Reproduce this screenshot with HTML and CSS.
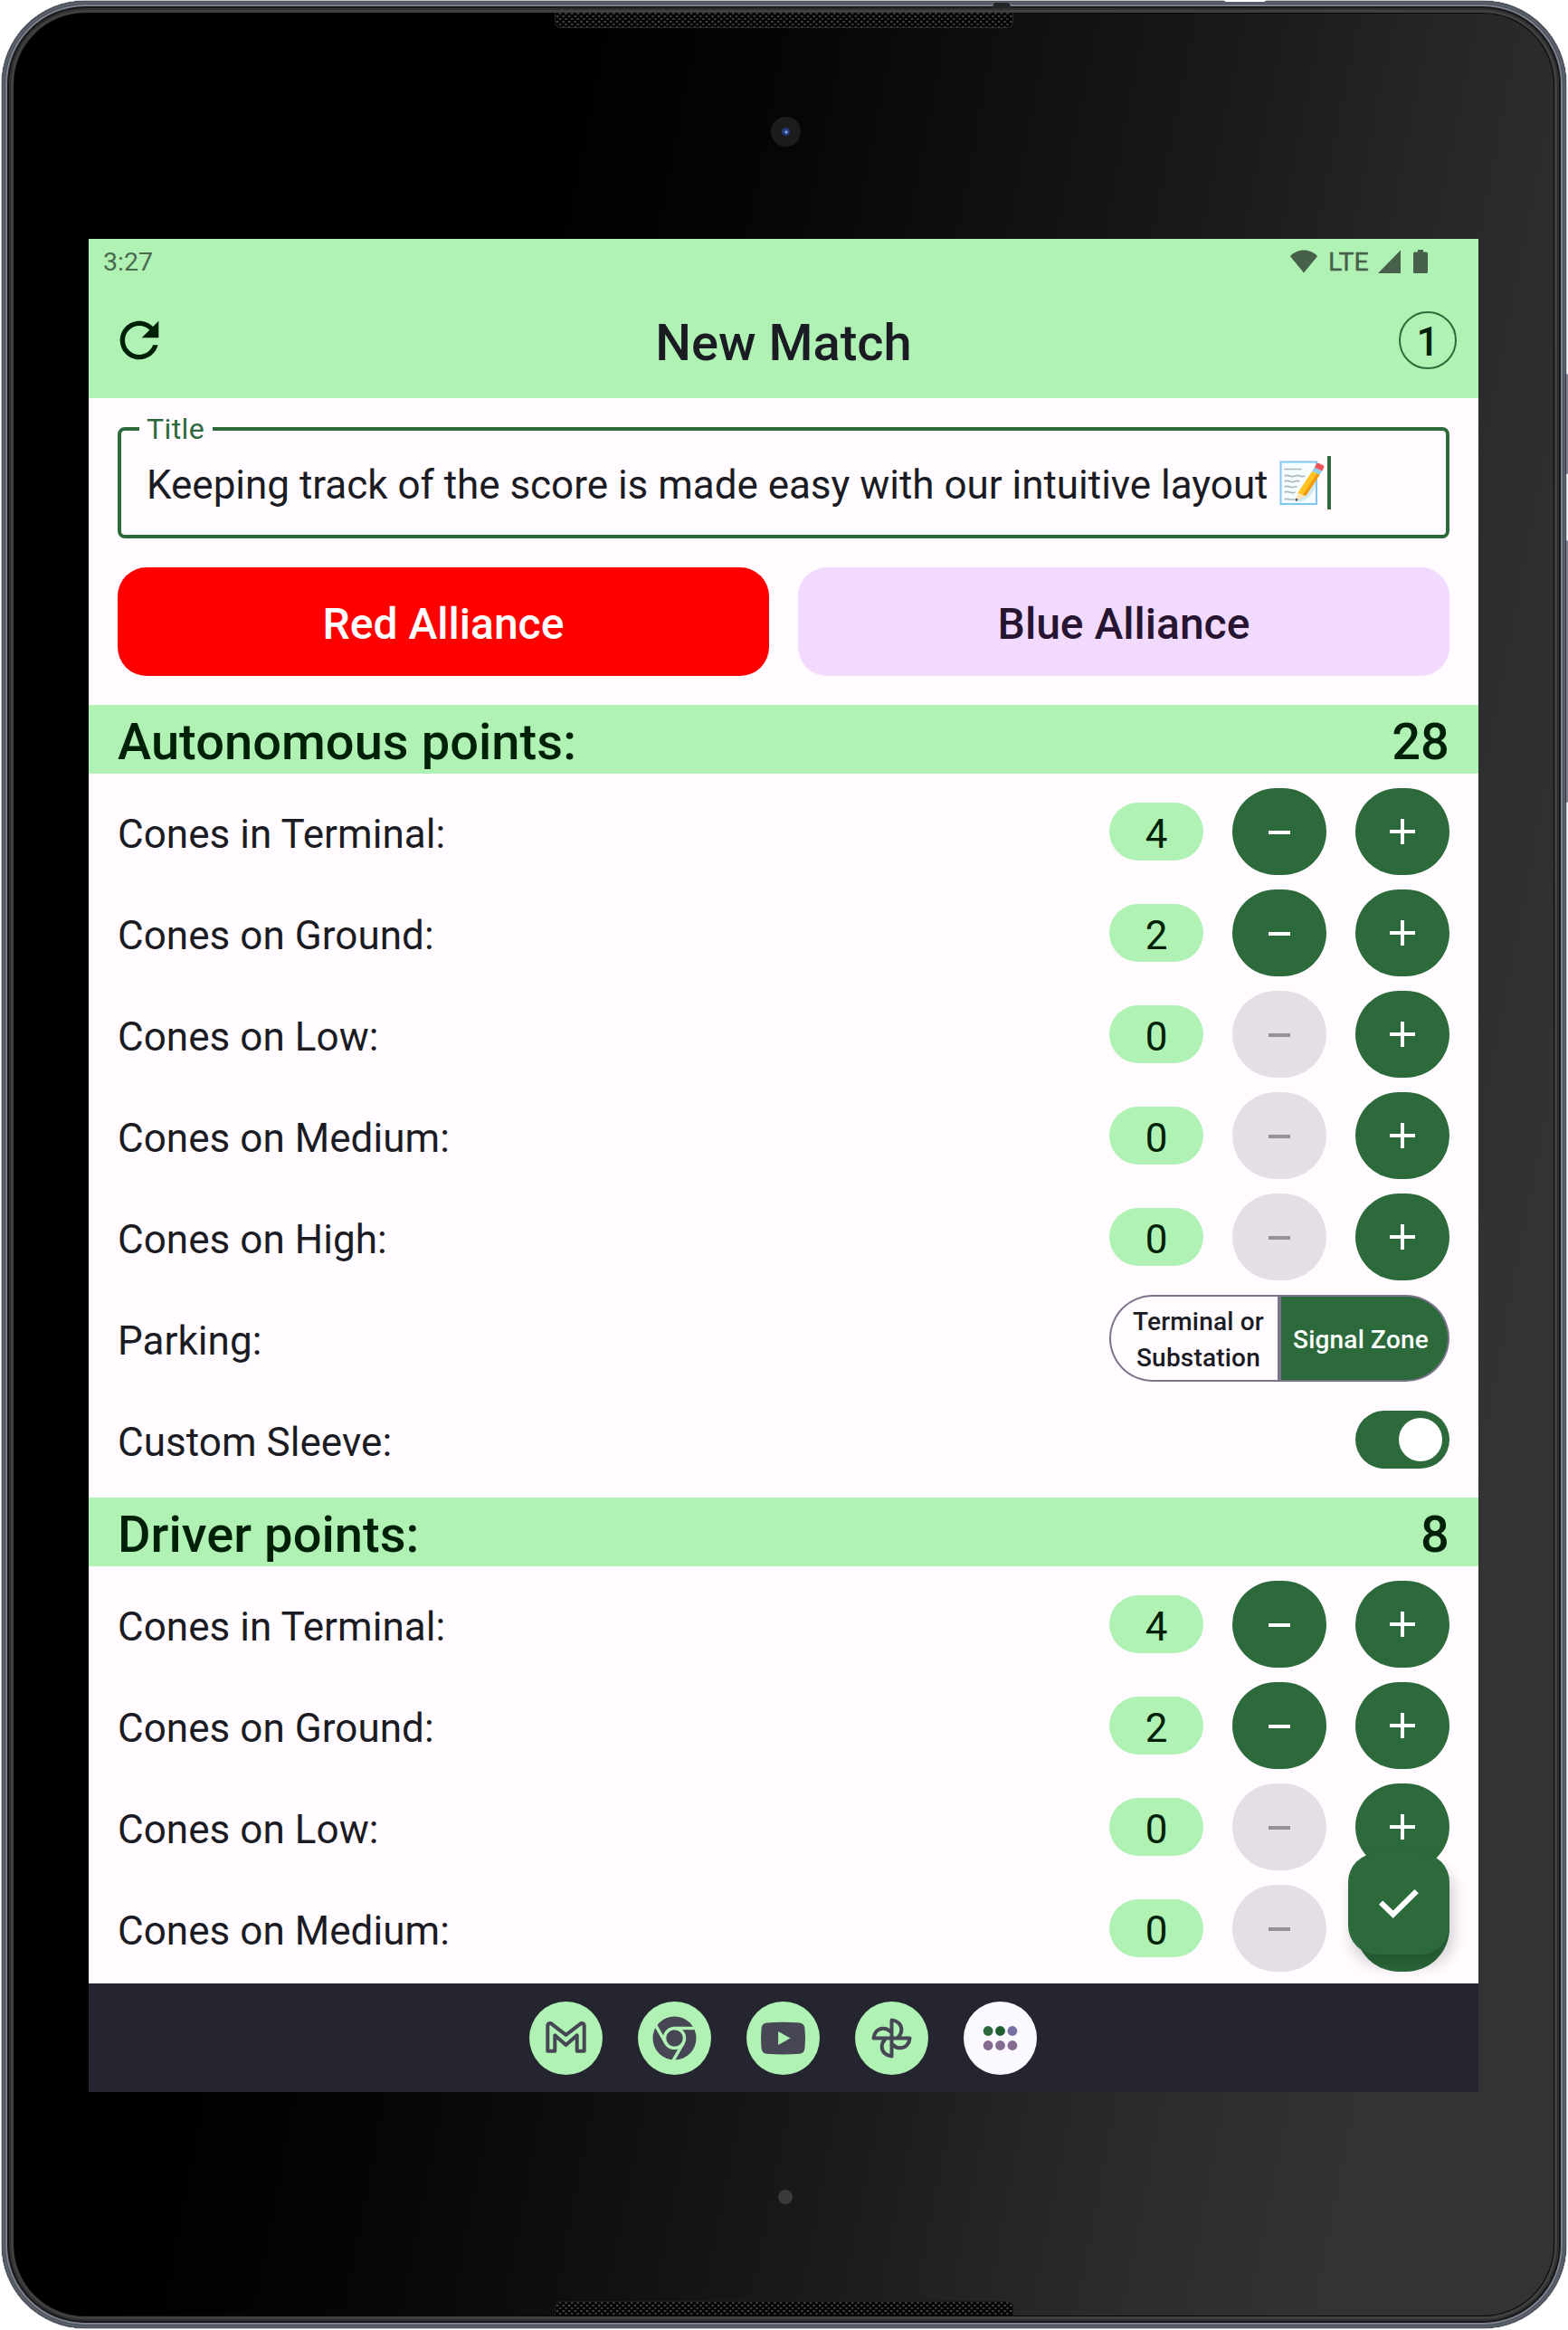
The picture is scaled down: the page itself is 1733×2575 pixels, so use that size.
FILE: index.html
```html
<!DOCTYPE html>
<html lang="en">
<head>
<meta charset="utf-8">
<title>New Match</title>
<link rel="stylesheet" href="styles.css">
</head>
<body>
<svg class="defs" width="0" height="0" aria-hidden="true">
  <symbol id="minus" viewBox="0 0 28 28"><path d="M2 13h24v4H2z"/></symbol>
  <symbol id="plus" viewBox="0 0 28 28"><path d="M0 12h12V0h4v12h12v4H16v12h-4V16H0z"/></symbol>
  <symbol id="petal" viewBox="-30 -30 60 60"><path d="M0 0V-20C6-19.500 10.800-15.500 10.800-9.500 10.800-6 9.500-3.500 7.500-1.500"/></symbol>
</svg>
<div class="device">
  <span class="top-gap"></span>
  <span class="notch"></span>
  <span class="side-key key-power"></span>
  <span class="side-key key-volume"></span>
  <span class="speaker speaker-top"></span>
  <span class="camera"></span>
  <span class="sensor"></span>
  <span class="speaker speaker-bottom"></span>

  <main class="screen">
    <div class="status-bar">
      <span class="clock">3:27</span>
      <div class="status-icons">
        <svg class="wifi" width="30" height="26" viewBox="0 0 30 26"><path d="M15 25.5 0 7.2C4 3 9 .6 15 .6S26 3 30 7.2z"/></svg>
        <span class="lte">LTE</span>
        <svg class="signal" width="25" height="26" viewBox="0 0 25 26"><path d="M25 .5V26H0z"/></svg>
        <svg class="battery" width="16" height="26" viewBox="0 0 16 26"><path d="M5 0h6v2.500h3.200c1 0 1.800.8 1.800 1.800v19.900c0 1-.8 1.800-1.800 1.800H1.800C.8 26 0 25.200 0 24.200V4.300c0-1 .8-1.800 1.800-1.800H5z"/></svg>
      </div>
    </div>

    <header class="app-bar">
      <svg class="refresh" width="64" height="64" viewBox="0 0 24 24"><path d="M17.650 6.350C16.200 4.900 14.210 4 12 4c-4.420 0-7.990 3.580-7.990 8s3.570 8 7.990 8c3.730 0 6.840-2.550 7.730-6h-2.080c-.82 2.330-3.040 4-5.650 4-3.310 0-6-2.690-6-6s2.690-6 6-6c1.660 0 3.140.69 4.220 1.780L13 11h7V4l-2.350 2.350z"/></svg>
      <h1>New Match</h1>
      <span class="match-count">1</span>
    </header>

    <div class="content">
      <div class="field">
        <span class="field-label">Title</span>
        <span class="field-text">Keeping track of the score is made easy with our intuitive layout</span>
        <svg class="memo" width="51" height="50" viewBox="0 0 51 50">
          <path d="M1.500 1.500h39.500V48H1.500z" fill="#f7fcff" stroke="#7fc6f2" stroke-width="2"/>
          <path d="M20 46c10-1 17-9 20-18V14L30 30z" fill="#cfe8f8"/>
          <g stroke="#a9b6bb" stroke-width="1.600" fill="none"><path d="M5.500 9.500h19M5.500 17q3-1.200 6 0t6 0 5 0 6 0M5.500 23q3-1.200 6 0t6 0 5 0M5.500 29q3-1.200 6 0t8-.5M5.500 35q3-1.200 6 0t6 0M5.500 43q3-1.200 6 0h6"/></g>
          <path d="m20.500 35.500 8.500 3.600L18 45z" fill="#fbe3b0"/>
          <path d="m18 41.500 3.200 1.400L17.800 45.500z" fill="#4e5359"/>
          <path d="m20.500 35.500 15.700-23.700 8.500 4L29 39.200z" fill="#ffc31f"/>
          <path d="m26 37.800 15.500-23.500 3.200 1.500L29 39.200z" fill="#f19a0c"/>
          <path d="m36.200 11.800 2.600-4.300 8.500 4-2.600 4.300z" fill="#8fd0ea"/>
          <path d="m38.800 7.500 2-3.300c.7-1.200 1.800-1.700 3-1.100l4.200 2c1.300.7 1.800 2 1.100 3.200l-1.800 3.200z" fill="#f0545d"/>
        </svg>
        <span class="caret"></span>
      </div>

      <div class="alliances">
        <button class="alliance red">Red Alliance</button>
        <button class="alliance blue">Blue Alliance</button>
      </div>

      <h2 class="section"><span>Autonomous points:</span><span>28</span></h2>
      <div class="rows">
        <div class="row"><span class="label">Cones in Terminal:</span><span class="chip">4</span><button class="step"><svg><use href="#minus"/></svg></button><button class="step"><svg><use href="#plus"/></svg></button></div>
        <div class="row"><span class="label">Cones on Ground:</span><span class="chip">2</span><button class="step"><svg><use href="#minus"/></svg></button><button class="step"><svg><use href="#plus"/></svg></button></div>
        <div class="row"><span class="label">Cones on Low:</span><span class="chip">0</span><button class="step off"><svg><use href="#minus"/></svg></button><button class="step"><svg><use href="#plus"/></svg></button></div>
        <div class="row"><span class="label">Cones on Medium:</span><span class="chip">0</span><button class="step off"><svg><use href="#minus"/></svg></button><button class="step"><svg><use href="#plus"/></svg></button></div>
        <div class="row"><span class="label">Cones on High:</span><span class="chip">0</span><button class="step off"><svg><use href="#minus"/></svg></button><button class="step"><svg><use href="#plus"/></svg></button></div>
        <div class="row"><span class="label">Parking:</span>
          <div class="segments"><span class="segment">Terminal or<br>Substation</span><span class="segment active">Signal Zone</span></div>
        </div>
        <div class="row"><span class="label">Custom Sleeve:</span><span class="switch"><span class="thumb"></span></span></div>
      </div>

      <h2 class="section"><span>Driver points:</span><span>8</span></h2>
      <div class="rows">
        <div class="row"><span class="label">Cones in Terminal:</span><span class="chip">4</span><button class="step"><svg><use href="#minus"/></svg></button><button class="step"><svg><use href="#plus"/></svg></button></div>
        <div class="row"><span class="label">Cones on Ground:</span><span class="chip">2</span><button class="step"><svg><use href="#minus"/></svg></button><button class="step"><svg><use href="#plus"/></svg></button></div>
        <div class="row"><span class="label">Cones on Low:</span><span class="chip">0</span><button class="step off"><svg><use href="#minus"/></svg></button><button class="step"><svg><use href="#plus"/></svg></button></div>
        <div class="row"><span class="label">Cones on Medium:</span><span class="chip">0</span><button class="step off"><svg><use href="#minus"/></svg></button><button class="step"><svg><use href="#plus"/></svg></button></div>
      </div>

      <button class="fab"><svg width="44" height="32" viewBox="0 0 44 32"><path d="M0 16.700 4.300 12.500 15.700 23.500 39.500 0 43.800 4.200 15.700 32z"/></svg></button>
    </div>

    <nav class="taskbar">
      <svg class="app" viewBox="-40.500 -40.500 81 81"><circle r="40.500" class="disc"/><path class="line" d="M-20.200 14.200V-13.500Q-20.200-16.600-17-16.600L0-3.600 17-16.600Q20.200-16.600 20.200-13.500V14.200H12.200V-3.200L0 7.600-12.200-3.200V14.200z"/></svg>
      <svg class="app" viewBox="-40.500 -40.500 81 81"><circle r="40.500" class="disc"/><circle r="24" class="ink"/><circle r="11" class="gap"/><g class="gap"><path d="M0-11H26"/><path d="M0-11H26" transform="rotate(120)"/><path d="M0-11H26" transform="rotate(240)"/></g></svg>
      <svg class="app" viewBox="-40.500 -40.500 81 81"><circle r="40.500" class="disc"/><path class="ink" d="M-18-17Q0-18.600 18-17 23.500-16.500 24-10.500 25 0 24 10.500 23.500 16.800 18 17.200 0 18.600-18 17.200-23.500 16.800-24 10.500-25 0-24-10.500-23.500-16.500-18-17z"/><path class="disc" d="M-5.400-7.600 8 0-5.400 7.500z"/></svg>
      <svg class="app" viewBox="-40.500 -40.500 81 81"><circle r="40.500" class="disc"/><g class="line"><use href="#petal" x="-30" y="-30" width="60" height="60"/><use href="#petal" x="-30" y="-30" width="60" height="60" transform="rotate(90)"/><use href="#petal" x="-30" y="-30" width="60" height="60" transform="rotate(180)"/><use href="#petal" x="-30" y="-30" width="60" height="60" transform="rotate(270)"/></g></svg>
      <svg class="app" viewBox="-40.500 -40.500 81 81"><circle r="40.500" fill="#fbf8ff"/><g fill="#866b91"><circle cx="-13.400" cy="8" r="5.400"/><circle cy="8" r="5.400"/><circle cx="13.400" cy="8" r="5.400"/></g><circle cx="-13.400" cy="-8" r="5.400" fill="#2c6a3b"/><circle cy="-8" r="5.400" fill="#1f6032"/><circle cx="13.400" cy="-8" r="5.400" fill="#7671a3"/></svg>
    </nav>
  </main>
</div>
</body>
</html>
```
FILE: styles.css
```css
* { box-sizing: border-box; }
html, body { margin: 0; background: #fff; }
body { font-family: Roboto, "Noto Sans", sans-serif; color: #1b1b23; }
h1, h2 { margin: 0; font-weight: 500; }
button { border: 0; padding: 0; font: inherit; display: block; }
.defs { position: absolute; }

/* Tablet body */
.device {
  position: relative;
  width: 1733px;
  height: 2575px;
  padding: 264px 99px 263px 98px;
  overflow: hidden;
}
.device::before {
  content: "";
  position: absolute;
  inset: 1px 2px 2px 2px;
  border-radius: 92px;
  background: linear-gradient(101deg, #000 28%, #060606 40%, #111 52.300%, #1b1b1b 63%, #252525 71%, #2c2c2c 78%, #333 88%);
  box-shadow:
    inset 0 0 0 1px #4a4f59,
    inset 0 0 0 3px #5c626d,
    inset 0 0 0 4px #464c56,
    inset 0 0 0 6px #7c818c,
    inset 0 0 0 8px #17181b,
    inset 0 0 0 10px #303030,
    inset 0 0 0 13px #404040,
    inset 0 0 0 14px #080808,
    0 0 0 1px #c3c9c9;
}
.top-gap { position: absolute; left: 1353px; top: 0; width: 46px; height: 2px; background: #fff; border-radius: 0 0 6px 6px; }
.notch { position: absolute; left: 1096px; top: 3px; width: 22px; height: 6px; background: #242526; clip-path: polygon(14% 0, 86% 0, 100% 100%, 0 100%); }
.side-key { position: absolute; right: 0; width: 3px; background: #7c818c; border-left: 1px solid #33363d; border-radius: 2px; }
.key-power { top: 413px; height: 111px; }
.key-volume { top: 597px; height: 290px; }
.speaker {
  position: absolute;
  left: 613px;
  width: 507px;
  height: 17px;
  border: 1px solid #2b2b2b;
  background:
    radial-gradient(circle at 2px 2px, #484848 1px, transparent 1.600px) 0 2px / 6.600px 6px,
    radial-gradient(circle at 5px 5px, #3c3c3c 1px, transparent 1.600px) 0 2px / 6.600px 6px,
    #040404;
}
.speaker-top { top: 14px; border-top: 0; border-radius: 0 0 7px 7px; }
.speaker-bottom { top: 2543px; height: 16px; border-bottom: 0; border-radius: 7px 7px 0 0; border-color: #1c1c1c; }
.camera {
  position: absolute; left: 852px; top: 129px; width: 33px; height: 33px; border-radius: 50%;
  background: radial-gradient(circle 2px at 17px 17px, #7fa0dd 60%, transparent), radial-gradient(circle 5px at 16.500px 16.500px, #263d80 75%, #1c1c1c);
}
.sensor { position: absolute; left: 860px; top: 2420px; width: 16px; height: 16px; border-radius: 50%; background: #3a3a3a; }

/* Screen */
.screen { position: relative; width: 1536px; height: 2048px; display: flex; flex-direction: column; background: #fffbff; overflow: hidden; }
.status-bar { height: 48px; padding: 2px 56px 0 16px; display: flex; justify-content: space-between; align-items: center; background: #aff2b4; color: #4c6a50; }
.clock { font-size: 28.500px; line-height: 44px; padding-top: 1px; }
.status-icons { display: flex; align-items: center; fill: #46604a; color: #46604a; }
.lte { font-size: 28.500px; -webkit-text-stroke: .4px #46604a; line-height: 44px; padding-top: 1px; margin: 0 9px 0 12px; width: 46px; }
.battery { margin-left: 14px; }
.app-bar { height: 128px; padding: 0 24px; display: flex; justify-content: space-between; align-items: center; background: #aff2b4; color: #1b1b23; }
.refresh { fill: #002108; }
.app-bar h1 { font-size: 56px; line-height: 72px; padding-top: 5px; }
.match-count { width: 64px; height: 64px; border: 2px solid #2c6a3b; border-radius: 50%; font-size: 44px; font-weight: 500; line-height: 65px; text-align: center; color: #002108; }

.content { position: relative; height: 1752px; overflow: hidden; }
.field { position: relative; margin: 32px 32px 0; height: 123px; border: 4px solid #2c6a3b; border-radius: 8px; padding: 0 28px; display: flex; align-items: center; }
.field-label { position: absolute; left: 20px; top: -22px; width: 81px; padding-left: 8px; background: #fffbff; color: #2c6a3b; font-size: 32px; line-height: 40px; letter-spacing: .4px; }
.field-text { font-size: 44px; line-height: 56px; padding-top: 4px; white-space: nowrap; letter-spacing: -.02px; }
.memo { margin-left: 12px; }
.caret { width: 4px; height: 59px; margin-left: 2px; background: #2c6a3b; }

.alliances { display: flex; gap: 32px; margin: 32px 32px; }
.alliance { flex: 1; height: 120px; border-radius: 32px; padding-top: 4px; font-size: 48px; font-weight: 500; }
.red { background: #f00; color: #fff; }
.blue { background: #f2daff; color: #261431; }

.section { height: 76px; padding: 6px 32px 0; display: flex; justify-content: space-between; align-items: center; background: #aff2b4; color: #002108; font-size: 56px; line-height: 70px; letter-spacing: .05px; }
.rows { display: flex; flex-direction: column; gap: 16px; padding: 16px 32px; }
.row { height: 96px; display: flex; align-items: center; gap: 32px; }
.label { flex: 1; font-size: 44px; line-height: 56px; padding-top: 6px; letter-spacing: .05px; }
.chip { width: 104px; height: 64px; border-radius: 32px; background: #aff2b4; color: #002108; font-size: 44px; line-height: 71px; text-align: center; }
.step { width: 104px; height: 96px; border-radius: 48px; background: #2c6a3b; fill: #fff; display: flex; align-items: center; justify-content: center; }
.step svg { width: 28px; height: 28px; }
.step.off { background: #e4dfe4; fill: #949198; }

.segments { display: grid; grid-template-columns: 186px 186px; gap: 4px; width: 376px; height: 96px; padding: 2px 0; border-radius: 48px; background: #7a748a; overflow: hidden; font-size: 28px; line-height: 40px; font-weight: 500; letter-spacing: .2px; text-align: center; }
.segment { display: flex; align-items: center; justify-content: center; margin-left: 2px; border-radius: 46px 0 0 46px; background: #fffbff; padding: 4px 0 0 9px; }
.segment.active { margin: 0 2px 0 0; border-radius: 0 46px 46px 0; background: #2c6a3b; color: #fff; padding: 4px 8px 0 0; }
.switch { width: 104px; height: 64px; padding: 8px; border-radius: 32px; background: #2c6a3b; display: flex; justify-content: flex-end; }
.thumb { width: 48px; height: 48px; border-radius: 50%; background: #fff; }

.fab { position: absolute; right: 32px; bottom: 32px; width: 112px; height: 112px; border-radius: 32px; background: #2c6a3b; fill: #fff; display: flex; align-items: center; justify-content: center; box-shadow: 4px 12px 16px rgba(0, 0, 0, .19); }

/* Launcher dock */
.taskbar { height: 120px; padding-right: 1px; display: flex; justify-content: center; align-items: center; gap: 39px; background: #25252f; }
.app { width: 81px; height: 81px; }
.disc { fill: #aff2b4; }
.ink { fill: #464654; }
.line { fill: none; stroke: #464654; stroke-width: 4; stroke-linejoin: round; stroke-linecap: round; }
.gap { fill: none; stroke: #aff2b4; stroke-width: 3.500; }
```
